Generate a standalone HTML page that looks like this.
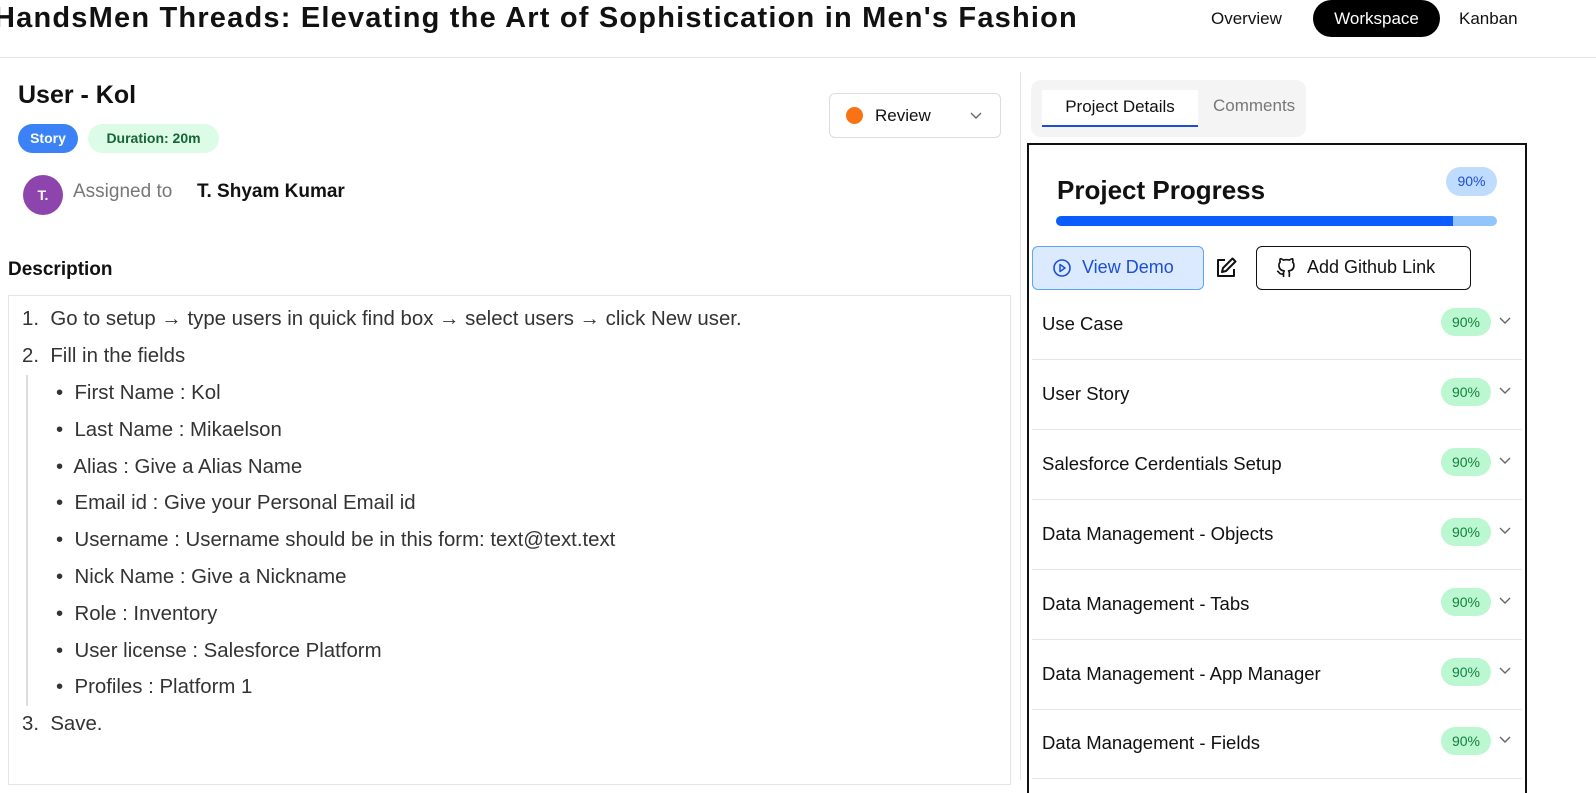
<!DOCTYPE html>
<html><head><meta charset="utf-8"><style>
*{box-sizing:border-box;margin:0;padding:0}
body{width:1596px;height:780px;overflow:hidden;background:#fff;font-family:"Liberation Sans",sans-serif;color:#111;position:relative}
.a{position:absolute;white-space:nowrap}
.row{position:absolute;left:1032px;width:490px;height:70px;border-bottom:1px solid #e5e5e5;font-size:18.5px}
.row span.t{position:absolute;left:10px;top:23px}
.row .p{position:absolute;left:409px;top:18px;width:50px;height:28px;border-radius:14px;background:#bbf7d0;color:#15803d;font-size:14px;text-align:center;line-height:28px}
.row svg{position:absolute;left:466px;top:26px}
</style></head><body>
<div class="a" style="left:-6px;top:2px;font-size:29px;font-weight:bold;letter-spacing:1.2px">HandsMen Threads: Elevating the Art of Sophistication in Men's Fashion</div>
<div class="a" style="left:1211px;top:9px;font-size:17px">Overview</div>
<div class="a" style="left:1313px;top:0;width:127px;height:37px;border-radius:19px;background:#000;color:#fff;font-size:17px;text-align:center;line-height:37px">Workspace</div>
<div class="a" style="left:1459px;top:9px;font-size:17px">Kanban</div>
<div class="a" style="left:0;top:57px;width:1596px;height:1px;background:#e5e5e5"></div>
<div class="a" style="left:1020px;top:72px;width:1px;height:708px;background:#e5e5e5"></div>

<div class="a" style="left:18px;top:81px;font-size:25px;font-weight:bold">User - Kol</div>
<div class="a" style="left:18px;top:124px;width:60px;height:29px;border-radius:15px;background:#3b82f6;color:#fff;font-size:14px;font-weight:bold;text-align:center;line-height:29px">Story</div>
<div class="a" style="left:88px;top:124px;width:131px;height:29px;border-radius:15px;background:#dcfce7;color:#166534;font-size:14px;font-weight:bold;text-align:center;line-height:29px">Duration: 20m</div>
<div class="a" style="left:23px;top:175px;width:40px;height:40px;border-radius:50%;background:#8e44ad;color:#fff;font-size:14px;font-weight:bold;text-align:center;line-height:40px">T.</div>
<div class="a" style="left:73px;top:181px;font-size:19px;color:#777">Assigned to</div>
<div class="a" style="left:197px;top:181px;font-size:19px;font-weight:bold">T. Shyam Kumar</div>

<div class="a" style="left:829px;top:93px;width:172px;height:45px;border:1px solid #ddd;border-radius:6px"></div>
<div class="a" style="left:846px;top:107px;width:17px;height:17px;border-radius:50%;background:#f97316"></div>
<div class="a" style="left:875px;top:106px;font-size:17px">Review</div>
<svg class="a" style="left:969px;top:111px" width="14" height="10"><path d="M2 2l5 5 5-5" stroke="#666" fill="none" stroke-width="1.4"/></svg>

<div class="a" style="left:8px;top:259px;font-size:19px;font-weight:bold">Description</div>
<div class="a" style="left:8px;top:295px;width:1003px;height:490px;border:1px solid #e5e5e5"></div>
<div class="a" style="left:22px;top:301px;font-size:20.4px;color:#333;line-height:37px">
<div>1.&nbsp; Go to setup → type users in quick find box → select users → click New user.</div>
<div>2.&nbsp; Fill in the fields</div>
<div style="border-left:2px solid #ddd;margin-left:4px;padding-left:28px;line-height:36.8px">
<div>•&nbsp; First Name : Kol</div><div>•&nbsp; Last Name : Mikaelson</div><div>•&nbsp; Alias : Give a Alias Name</div><div>•&nbsp; Email id : Give your Personal Email id</div><div>•&nbsp; Username : Username should be in this form: text@text.text</div><div>•&nbsp; Nick Name : Give a Nickname</div><div>•&nbsp; Role : Inventory</div><div>•&nbsp; User license : Salesforce Platform</div><div>•&nbsp; Profiles : Platform 1</div>
</div>
<div>3.&nbsp; Save.</div>
</div>

<div class="a" style="left:1031px;top:80px;width:275px;height:57px;border-radius:10px;background:#f4f4f4"></div>
<div class="a" style="left:1042px;top:90px;width:156px;height:37px;background:#fff;border-bottom:2px solid #1d4ed8;font-size:17px;text-align:center;line-height:33px">Project Details</div>
<div class="a" style="left:1213px;top:96px;font-size:17px;color:#777">Comments</div>

<div class="a" style="left:1027px;top:143px;width:500px;height:650px;border:2px solid #111;border-bottom:none"></div>
<div class="a" style="left:1057px;top:175px;font-size:26px;font-weight:bold">Project Progress</div>
<div class="a" style="left:1446px;top:167px;width:51px;height:29px;border-radius:15px;background:#bfdbfe;color:#1d4ed8;font-size:14px;text-align:center;line-height:29px">90%</div>
<div class="a" style="left:1056px;top:216px;width:441px;height:10px;border-radius:5px;background:#93c5fd;overflow:hidden"><div style="width:397px;height:10px;background:#0b5cff"></div></div>
<div class="a" style="left:1032px;top:246px;width:172px;height:44px;border:1px solid #60a5fa;border-radius:6px;background:#dbeafe"></div>
<svg class="a" style="left:1052px;top:258px" width="20" height="20"><circle cx="10" cy="10" r="8" fill="none" stroke="#1d4ed8" stroke-width="1.6"/><path d="M8 6.5v7l5-3.5z" fill="none" stroke="#1d4ed8" stroke-width="1.5" stroke-linejoin="round"/></svg>
<div class="a" style="left:1082px;top:257px;font-size:18px;color:#1d4ed8">View Demo</div>
<svg class="a" style="left:1214px;top:256px" width="24" height="24" viewBox="0 0 24 24"><path d="M11 4H4v16h16v-7" fill="none" stroke="#111" stroke-width="2" stroke-linejoin="round"/><path d="M18.5 2.5l3 3L12 15l-4 1 1-4z" fill="none" stroke="#111" stroke-width="2" stroke-linejoin="round"/></svg>
<div class="a" style="left:1256px;top:246px;width:215px;height:44px;border:1.5px solid #111;border-radius:6px"></div>
<svg class="a" style="left:1276px;top:257px" width="20" height="22" viewBox="0 0 24 24"><path d="M9 19c-5 1.5-5-2.5-7-3m14 6v-3.9a3.4 3.4 0 0 0-.9-2.6c3.1-.3 6.4-1.5 6.4-7A5.4 5.4 0 0 0 20 4.8 5 5 0 0 0 19.9 1S18.7.6 16 2.5a13.4 13.4 0 0 0-7 0C6.3.6 5.1 1 5.1 1A5 5 0 0 0 5 4.8a5.4 5.4 0 0 0-1.5 3.7c0 5.4 3.3 6.6 6.4 7a3.4 3.4 0 0 0-.9 2.6V22" fill="none" stroke="#111" stroke-width="2" stroke-linecap="round" stroke-linejoin="round"/></svg>
<div class="a" style="left:1307px;top:257px;font-size:18px">Add Github Link</div>

<div class="row" style="top:290px"><span class="t">Use Case</span><div class="p">90%</div><svg width="14" height="10"><path d="M2 2l5 5 5-5" stroke="#666" fill="none" stroke-width="1.4"/></svg></div>
<div class="row" style="top:360px"><span class="t">User Story</span><div class="p">90%</div><svg width="14" height="10"><path d="M2 2l5 5 5-5" stroke="#666" fill="none" stroke-width="1.4"/></svg></div>
<div class="row" style="top:430px"><span class="t">Salesforce Cerdentials Setup</span><div class="p">90%</div><svg width="14" height="10"><path d="M2 2l5 5 5-5" stroke="#666" fill="none" stroke-width="1.4"/></svg></div>
<div class="row" style="top:500px"><span class="t">Data Management - Objects</span><div class="p">90%</div><svg width="14" height="10"><path d="M2 2l5 5 5-5" stroke="#666" fill="none" stroke-width="1.4"/></svg></div>
<div class="row" style="top:570px"><span class="t">Data Management - Tabs</span><div class="p">90%</div><svg width="14" height="10"><path d="M2 2l5 5 5-5" stroke="#666" fill="none" stroke-width="1.4"/></svg></div>
<div class="row" style="top:640px"><span class="t">Data Management - App Manager</span><div class="p">90%</div><svg width="14" height="10"><path d="M2 2l5 5 5-5" stroke="#666" fill="none" stroke-width="1.4"/></svg></div>
<div class="row" style="top:709px"><span class="t">Data Management - Fields</span><div class="p">90%</div><svg width="14" height="10"><path d="M2 2l5 5 5-5" stroke="#666" fill="none" stroke-width="1.4"/></svg></div>
</body></html>
